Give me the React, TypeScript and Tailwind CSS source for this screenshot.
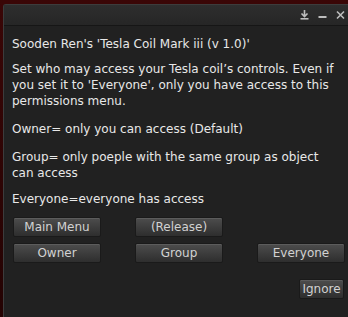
import React from "react";

const Btn = ({ label, w = "w-[88px]" }: { label: string; w?: string }) => (
  <div
    className={`${w} h-[20px] flex items-center justify-center rounded-[2px] border border-[#1a1a1a] bg-gradient-to-b from-[#4d4d4d] to-[#2e2e2e] text-[#d2d2d2] text-[12px] leading-none shadow-[inset_0_1px_0_#5c5c5c]`}
  >
    {label}
  </div>
);

export default function App() {
  return (
    <div
      className="w-[348px] h-[317px] overflow-hidden bg-gradient-to-b from-[#3a0606] to-[#240303] flex"
      style={{ fontFamily: '"DejaVu Sans", sans-serif' }}
    >
      <div className="ml-[3px] mt-[4px] flex-1 flex flex-col bg-[#212121] border-l border-t border-[#3c3c3c] rounded-tl-[3px]">
        <div className="h-[21px] flex items-center justify-end gap-[9px] pr-[3px] bg-gradient-to-b from-[#2e2e2e] to-[#262626] border-b border-[#161616]">
          <svg width="9" height="10" viewBox="0 0 9 10">
            <path d="M4.5 0v6M1.5 3.5l3 3 3-3" stroke="#bdbdbd" strokeWidth="1.6" fill="none" />
            <rect x="0.5" y="8" width="8" height="1.6" fill="#bdbdbd" />
          </svg>
          <svg width="9" height="10" viewBox="0 0 9 10">
            <rect x="0.5" y="6" width="8" height="2" fill="#bdbdbd" />
          </svg>
          <svg width="9" height="10" viewBox="0 0 9 10">
            <path d="M1 1.5l7 7M8 1.5l-7 7" stroke="#bdbdbd" strokeWidth="1.6" />
          </svg>
        </div>
        <div className="pl-[8px] pr-[6px] pt-[10px] text-[12px] leading-[16px] text-[#e8e8e8]">
          <div>Sooden Ren's 'Tesla Coil Mark iii (v 1.0)'</div>
          <div className="mt-[9px]">
            Set who may access your Tesla coil’s controls. Even if you set it to 'Everyone', only you have access to this
            permissions menu.
          </div>
          <div className="mt-[12px]">Owner= only you can access (Default)</div>
          <div className="mt-[12px]">Group= only poeple with the same group as object can access</div>
          <div className="mt-[10px]">Everyone=everyone has access</div>
        </div>
        <div className="pl-[9px] mt-[10px] flex flex-col gap-[6px]">
          <div className="flex gap-[34px]">
            <Btn label="Main Menu" />
            <Btn label="(Release)" />
          </div>
          <div className="flex gap-[34px]">
            <Btn label="Owner" />
            <Btn label="Group" />
            <Btn label="Everyone" />
          </div>
        </div>
        <div className="flex justify-end pr-[4px] mt-[16px]">
          <Btn label="Ignore" w="w-[45px]" />
        </div>
      </div>
    </div>
  );
}
